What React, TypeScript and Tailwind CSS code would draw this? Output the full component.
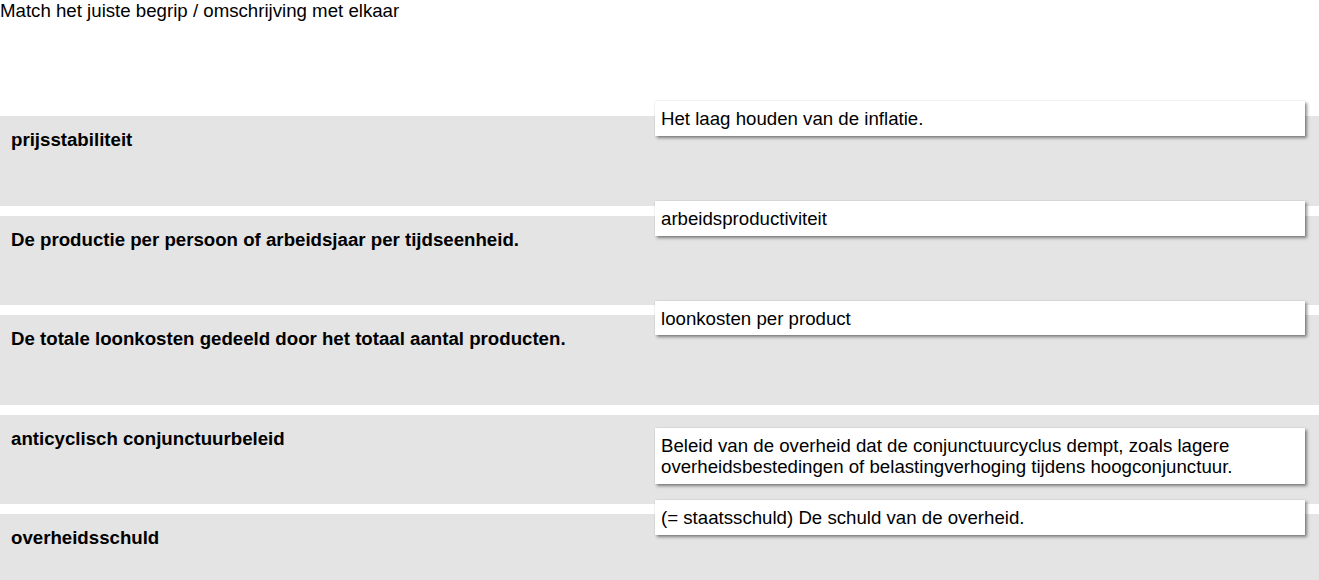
import React from 'react';

type Pair = { term: string; answer: string; offset: string };

const pairs: Pair[] = [
  { term: 'prijsstabiliteit', answer: 'Het laag houden van de inflatie.', offset: 'top-[-15px]' },
  {
    term: 'De productie per persoon of arbeidsjaar per tijdseenheid.',
    answer: 'arbeidsproductiviteit',
    offset: 'top-[-14.5px]',
  },
  {
    term: 'De totale loonkosten gedeeld door het totaal aantal producten.',
    answer: 'loonkosten per product',
    offset: 'top-[-14.5px]',
  },
  {
    term: 'anticyclisch conjunctuurbeleid',
    answer:
      'Beleid van de overheid dat de conjunctuurcyclus dempt, zoals lagere overheidsbestedingen of belastingverhoging tijdens hoogconjunctuur.',
    offset: 'top-[13px]',
  },
  {
    term: 'overheidsschuld',
    answer: '(= staatsschuld) De schuld van de overheid.',
    offset: 'top-[-14px]',
  },
];

function MatchRow({ pair }: { pair: Pair }) {
  return (
    <div className="relative h-[89.5px] bg-[#e4e4e4] pl-[11px] pt-[13px]">
      <div className="font-bold text-black">{pair.term}</div>
      <div
        className={`absolute left-[655px] w-[650px] bg-white px-[6px] pt-[7px] pb-[6px] text-black shadow-[2px_2px_3px_rgba(0,0,0,0.45),0_0_1px_rgba(0,0,0,0.2)] ${pair.offset}`}
      >
        {pair.answer}
      </div>
    </div>
  );
}

export default function App() {
  return (
    <div
      className="w-[1319px] h-[580px] overflow-hidden bg-white text-[18.67px] leading-[21.5px]"
      style={{ fontFamily: '"Liberation Sans", Arial, sans-serif' }}
    >
      <div className="text-black">Match het juiste begrip / omschrijving met elkaar</div>
      <div className="mt-[94.5px] flex flex-col gap-[10px]">
        {pairs.map((p) => (
          <MatchRow key={p.term} pair={p} />
        ))}
      </div>
    </div>
  );
}
